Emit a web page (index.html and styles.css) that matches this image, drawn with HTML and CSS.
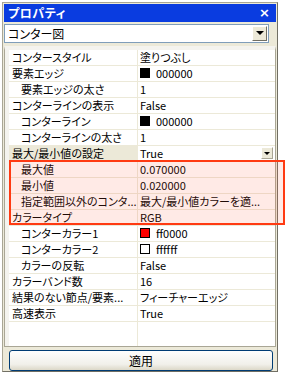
FILE: index.html
```html
<!DOCTYPE html>
<html lang="ja">
<head>
<meta charset="utf-8">
<link rel="stylesheet" href="styles.css">
</head>
<body>
<div class="panel">
  <div class="title"><span class="title-text">プロパティ</span><span class="close">×</span></div>
  <div class="combo"><span class="combo-text">コンター図</span><span class="combo-btn"><i class="tri"></i></span></div>
  <div class="grid">
    <div class="row"><div class="lab">コンタースタイル</div><div class="val">塗りつぶし</div></div>
    <div class="row"><div class="lab">要素エッジ</div><div class="val"><i class="sw black"></i>000000</div></div>
    <div class="row"><div class="lab sub">要素エッジの太さ</div><div class="val">1</div></div>
    <div class="row"><div class="lab">コンターラインの表示</div><div class="val">False</div></div>
    <div class="row"><div class="lab sub">コンターライン</div><div class="val"><i class="sw black"></i>000000</div></div>
    <div class="row"><div class="lab sub">コンターラインの太さ</div><div class="val">1</div></div>
    <div class="row sel"><div class="lab">最大/最小値の設定</div><div class="val">True<span class="dd"><i class="tri small"></i></span></div></div>
    <div class="row"><div class="lab sub">最大値</div><div class="val">0.070000</div></div>
    <div class="row"><div class="lab sub">最小値</div><div class="val">0.020000</div></div>
    <div class="row"><div class="lab sub">指定範囲以外のコンタ...</div><div class="val">最大/最小値カラーを適...</div></div>
    <div class="row"><div class="lab">カラータイプ</div><div class="val">RGB</div></div>
    <div class="row"><div class="lab sub">コンターカラー1</div><div class="val"><i class="sw red"></i>ff0000</div></div>
    <div class="row"><div class="lab sub">コンターカラー2</div><div class="val"><i class="sw white"></i>ffffff</div></div>
    <div class="row"><div class="lab sub">カラーの反転</div><div class="val">False</div></div>
    <div class="row"><div class="lab">カラーバンド数</div><div class="val">16</div></div>
    <div class="row"><div class="lab">結果のない節点/要素...</div><div class="val">フィーチャーエッジ</div></div>
    <div class="row"><div class="lab">高速表示</div><div class="val">True</div></div>
    <div class="row last"><div class="lab"></div><div class="val"></div></div>
  </div>
  <div class="btn-wrap"><div class="btn">適用</div></div>
</div>
<div class="highlight"></div>
</body>
</html>
```
FILE: styles.css
```css
html, body {
  margin: 0;
  padding: 0;
  background: #ffffff;
}
body {
  width: 291px;
  height: 377px;
  position: relative;
  font-family: "Noto Sans CJK JP", "Liberation Sans", sans-serif;
  font-size: 11px;
  font-feature-settings: "palt";
  color: #000;
}
.panel {
  margin: 2px 0 0 2px;
  width: 272px;
  height: 368px;
  background: #ece9d8;
  border: 1px solid #a9a695;
  border-right-color: #716f64;
  border-bottom-color: #716f64;
  display: flex;
  flex-direction: column;
  padding: 0 1px;
}
.title {
  height: 18px;
  background: #0a3ce0;
  color: #fff;
  display: flex;
  align-items: center;
  justify-content: space-between;
  padding: 0 6px 0 4px;
  margin: 1px 0 0;
}
.title-text {
  font-weight: bold;
  font-size: 12px;
  letter-spacing: 0.5px;
}
.close {
  font-family: "DejaVu Sans", sans-serif;
  font-weight: bold;
  font-size: 13px;
  line-height: 1;
}
.combo {
  margin-top: 2px;
  height: 17px;
  width: 263px;
  background: #fff;
  border: 1px solid #7f9db9;
  display: flex;
  align-items: center;
  justify-content: space-between;
}
.combo-text {
  padding-left: 3px;
  font-size: 12px;
}
.combo-btn {
  width: 13px;
  height: 13px;
  margin-right: 1px;
  background: #ece9d8;
  border: 1px solid;
  border-color: #fff #716f64 #716f64 #fff;
  display: flex;
  align-items: center;
  justify-content: center;
}
.tri {
  width: 0;
  height: 0;
  border-left: 4px solid transparent;
  border-right: 4px solid transparent;
  border-top: 4px solid #000;
}
.tri.small {
  border-left-width: 3px;
  border-right-width: 3px;
  border-top-width: 3px;
}
.grid {
  margin-top: 3px;
  height: 298px;
  width: 266px;
  background: #fff;
  border: 1px solid #a9a695;
  border-top: 4px solid #f4f3ee;
  display: flex;
  flex-direction: column;
  padding-left: 4px;
  background-clip: content-box;
  box-shadow: inset 4px 0 0 #f4f3ee;
}
.row {
  display: flex;
  height: 16px;
  border-bottom: 1px solid #ece9d8;
  box-sizing: border-box;
  flex: none;
}
.row.last {
  flex: 1;
  border-bottom: none;
}
.lab {
  width: 129px;
  flex: none;
  border-right: 1px solid #ece9d8;
  padding-left: 3px;
  box-sizing: border-box;
  white-space: nowrap;
  overflow: hidden;
  line-height: 15px;
}
.lab.sub {
  padding-left: 12px;
}
.val {
  flex: 1;
  padding-left: 2px;
  white-space: nowrap;
  overflow: hidden;
  line-height: 15px;
  display: flex;
  align-items: center;
  position: relative;
}
.sel .lab {
  background: #ece9d8;
}
.dd {
  margin-left: auto;
  margin-right: 2px;
  width: 12px;
  height: 12px;
  background: #ece9d8;
  border: 1px solid;
  border-color: #fff #a9a695 #a9a695 #fff;
  box-sizing: border-box;
  display: flex;
  align-items: center;
  justify-content: center;
}
.sw {
  width: 10px;
  height: 10px;
  box-sizing: border-box;
  border: 1px solid #000;
  margin-right: 6px;
  flex: none;
}
.sw.black { background: #000; }
.sw.red { background: #ff0000; }
.sw.white { background: #fff; }
.btn-wrap {
  padding: 3px 3px 0 5px;
}
.btn {
  height: 19px;
  border: 1px solid #003c74;
  border-radius: 3px;
  background: linear-gradient(#fefefe, #f1f0ea 70%, #dcd8c8);
  text-align: center;
  line-height: 19px;
  font-size: 12px;
}
.highlight {
  position: absolute;
  left: 9px;
  top: 160px;
  width: 272px;
  height: 61px;
  border: 2px solid #ff3a12;
  background: rgba(255, 90, 60, 0.13);
}
```
